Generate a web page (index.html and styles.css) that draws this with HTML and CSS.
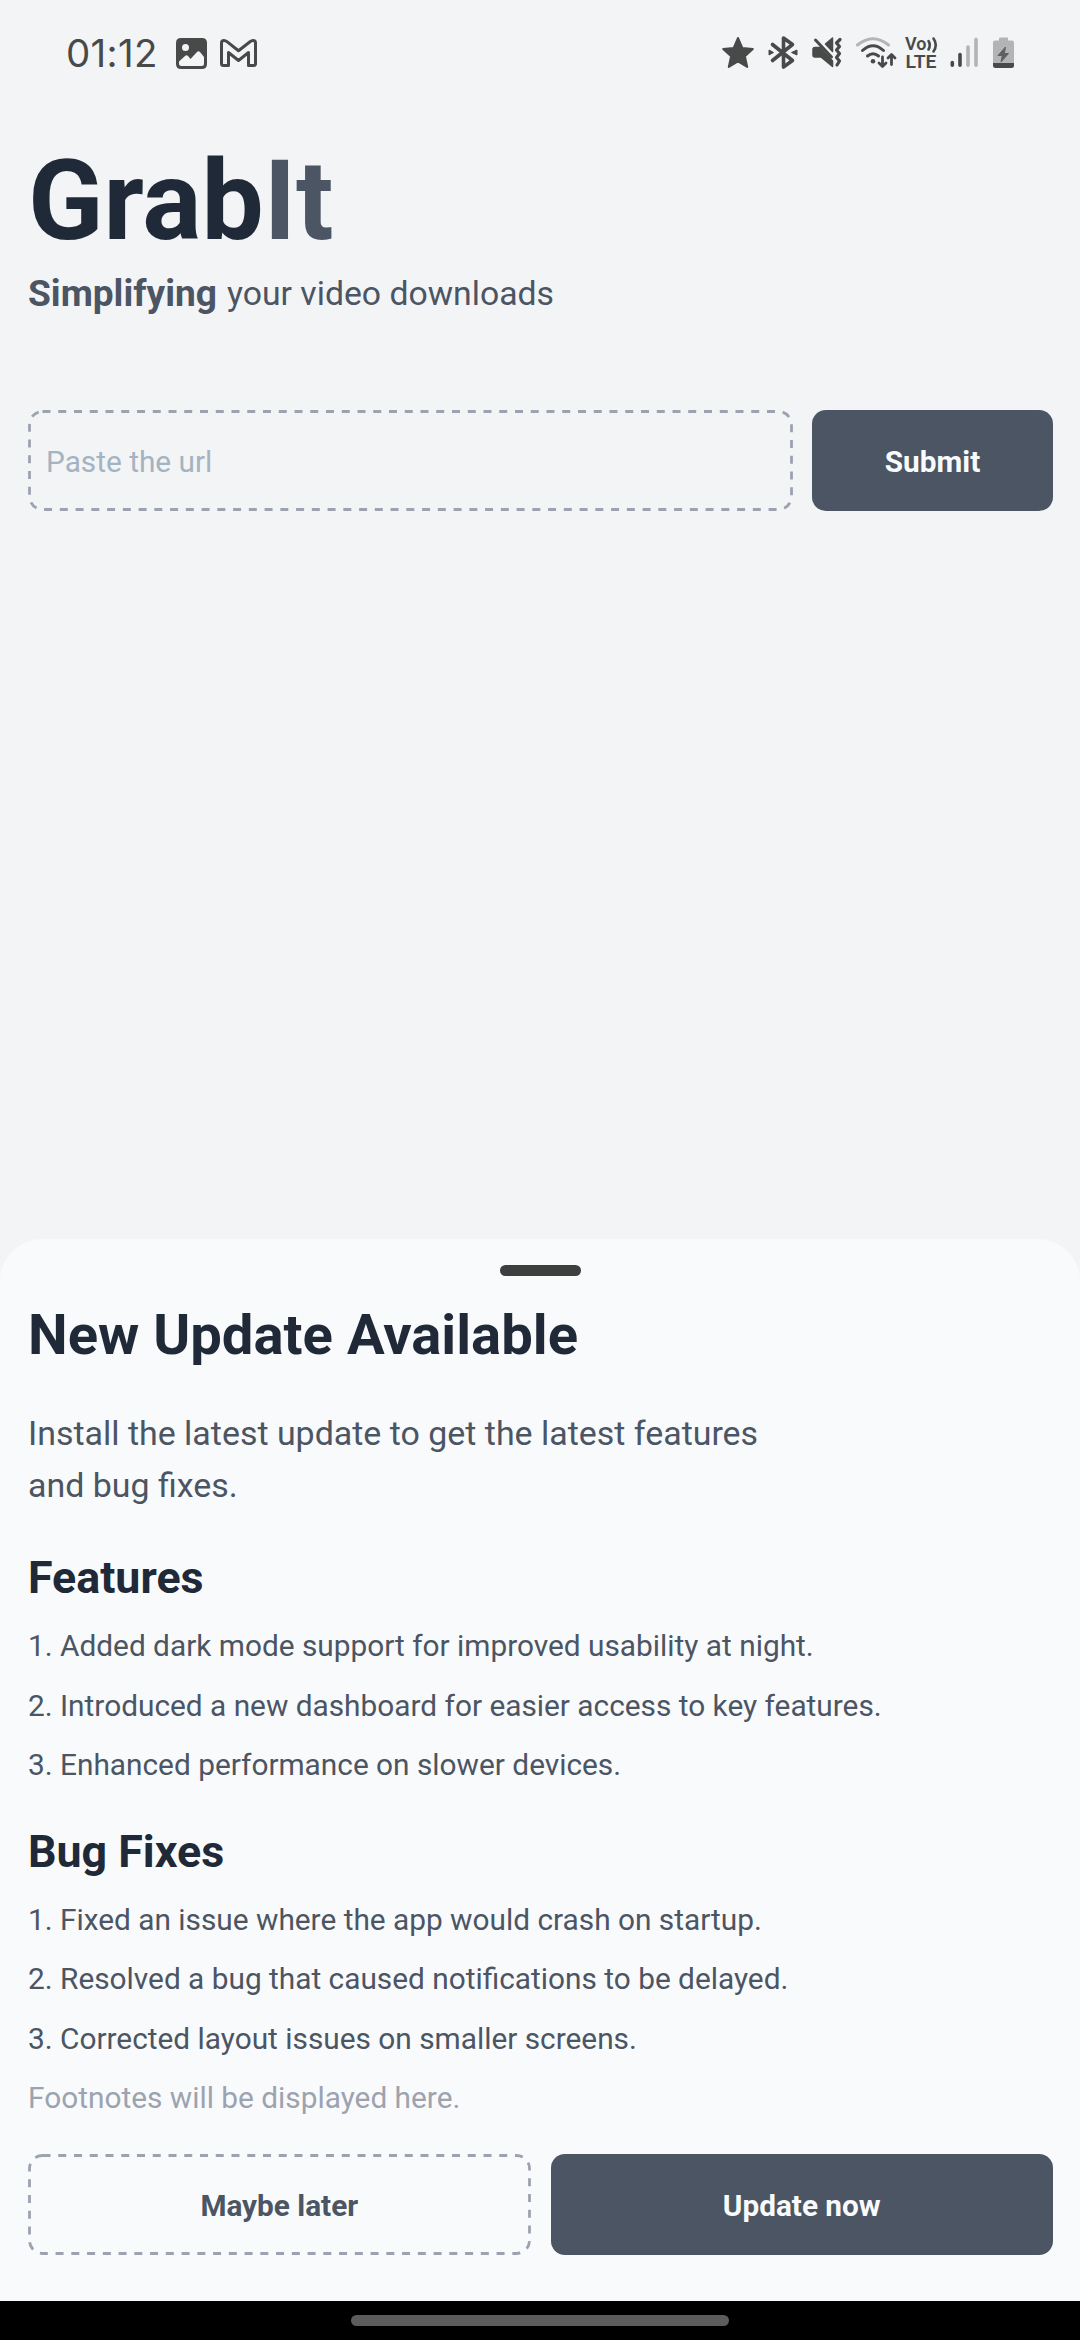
FILE: index.html
```html
<!DOCTYPE html>
<html lang="en">
<head>
<meta charset="utf-8">
<title>GrabIt</title>
<link rel="stylesheet" href="styles.css">
</head>
<body>
<div class="screen">
  <header class="status">
    <div class="status-left">
      <span class="clock">01:12</span>
      <svg class="ic-photo" width="31" height="31" viewBox="0 0 31 31"><path fill="#484a49" fill-rule="evenodd" d="M5 0H26Q31 0 31 5V26Q31 31 26 31H5Q0 31 0 26V5Q0 0 5 0ZM9.500 6A3.500 3.500 0 1 0 9.500 13A3.500 3.500 0 1 0 9.500 6ZM3 23.500V25.500Q3 28 5.500 28H25.500Q28 28 28 25.500V19L24 14Q22.500 12.500 21 14L14.500 21L12 18Q10.500 16.500 9 18Z"/></svg>
      <svg class="ic-mail" width="37" height="28" viewBox="0 0 37 28"><path fill="none" stroke="#484a49" stroke-width="3" stroke-linejoin="round" d="M1.500 24.500V4Q1.500 1.500 4 1.500Q5.500 1.500 7 2.700L18.500 11.700L30 2.700Q31.500 1.500 33 1.500Q35.500 1.500 35.500 4V24.500Q35.500 26.500 33.500 26.500H28.500V13.500L18.500 21.500L8.500 13.500V26.500H3.500Q1.500 26.500 1.500 24.500Z"/></svg>
    </div>
    <svg class="status-right" width="300" height="40" viewBox="720 33 300 40" fill="none" stroke="#484a49">
      <path fill="#484a49" stroke-width="2" stroke-linejoin="round" d="M738 38L742.300 48L752.800 49L744.900 56.200L747.200 67L738 61.500L728.800 67L731.100 56.200L723.200 49L733.700 48Z"/>
      <path stroke-width="3.600" stroke-linejoin="round" stroke-linecap="round" d="M772.500 44.500L792.500 60.500L783.500 67V38L792.500 44.500L772.500 60.500"/>
      <path fill="#484a49" stroke-width="1" d="M769 50L773.500 52.500L769 55ZM797 50L791.500 52.500L797 55Z"/>
      <path fill="#484a49" stroke-width="1.500" stroke-linejoin="round" d="M815 47.500H820L832.500 61V66.500L821 57H815Q813 57 813 55V49.500Q813 47.500 815 47.500ZM825.500 44L832.500 38V51.500Z"/>
      <path stroke-width="3" stroke-linecap="round" d="M815.500 40L831.500 57"/>
      <path stroke-width="3.200" stroke-linejoin="round" stroke-linecap="round" d="M840 39.500L836.500 43L839.500 46.500L836.500 50L839.500 53.500L836.500 57.500L839.500 61L837 65"/>
      <path stroke="#b2b4b5" stroke-width="3" stroke-linecap="round" d="M857.500 45Q873 32.500 888.500 45"/>
      <g stroke-width="3" stroke-linecap="round"><path d="M862.500 50.500Q873 41 883.500 50.500M867.500 56Q873 51.500 878.500 56"/><path stroke-width="2.800" stroke-linejoin="round" d="M882.500 57V66M879 63L882.500 66.500L886 63M891.500 64.500V55M888 58L891.500 54.500L895 58"/></g>
      <circle cx="873" cy="61.300" r="2.300" fill="#484a49" stroke="none"/>
      <g fill="#484a49" stroke="none" class="volte"><text x="905" y="50" textLength="21.500" lengthAdjust="spacingAndGlyphs">Vo</text><text x="905.500" y="68" textLength="31" lengthAdjust="spacingAndGlyphs">LTE</text></g>
      <path stroke-width="2.600" stroke-linecap="round" d="M928.500 41Q931 45 928.500 49.500M933.500 38.500Q938 45 933.500 51.500"/>
      <g stroke-width="3.600" stroke-linecap="round"><path d="M952.300 62.500V65.300M960 54.500V65.300"/><path stroke="#b2b4b5" d="M968 47V65.300M976 39.500V65.300"/></g>
      <path fill="#b2b4b5" stroke="none" d="M1000.500 37.500H1007Q1008 37.500 1008 38.500V40.500H1012Q1014 40.500 1014 42.500V63H993V42.500Q993 40.500 995 40.500H999V38.500Q999 37.500 1000.500 37.500Z"/>
      <path fill="#484a49" stroke="none" d="M993 63H1014V65.500Q1014 68 1011.500 68H995.500Q993 68 993 65.500Z"/>
      <path fill="#5f6160" stroke="#5f6160" stroke-width="1" stroke-linejoin="round" d="M1005.500 47L998 55.500H1002.300L1001 62L1008.500 53.500H1004.300Z"/>
    </svg>
  </header>

  <main class="home">
    <h1 class="brand">Grab<span>It</span></h1>
    <p class="tagline"><strong>Simplifying</strong><span>your video downloads</span></p>
    <form class="url-form">
      <div class="field"><svg class="dash"><rect class="dash-line" x="1.500" y="1.500" width="762" height="98" rx="13"/></svg><span class="placeholder">Paste the url</span></div>
      <div class="btn solid submit">Submit</div>
    </form>
  </main>

  <section class="sheet">
    <div class="handle"></div>
    <h2>New Update Available</h2>
    <p class="intro">Install the latest update to get the latest features<br>and bug fixes.</p>
    <h3>Features</h3>
    <ul>
      <li>1. Added dark mode support for improved usability at night.</li>
      <li>2. Introduced a new dashboard for easier access to key features.</li>
      <li>3. Enhanced performance on slower devices.</li>
    </ul>
    <h3>Bug Fixes</h3>
    <ul>
      <li>1. Fixed an issue where the app would crash on startup.</li>
      <li>2. Resolved a bug that caused notifications to be delayed.</li>
      <li>3. Corrected layout issues on smaller screens.</li>
    </ul>
    <p class="foot">Footnotes will be displayed here.</p>
    <div class="actions">
      <div class="btn outline"><svg class="dash"><rect class="dash-line" x="1.500" y="1.500" width="500" height="98" rx="13"/></svg>Maybe later</div>
      <div class="btn solid">Update now</div>
    </div>
  </section>
  <footer class="nav"><div class="pill"></div></footer>
</div>
</body>
</html>
```

FILE: styles.css
```css
* { box-sizing: border-box; margin: 0; padding: 0; }
body { background: #f3f4f6; font-family: Roboto, sans-serif; color: #4b5563; }
.screen { width: 1080px; height: 2340px; display: flex; flex-direction: column; overflow: hidden; }
.status { height: 106px; display: flex; justify-content: space-between; padding: 0 60px 0 66px; }
.status-left { display: flex; align-items: flex-start; padding-top: 38px; }
.status-left svg { margin-right: 13px; }
.status-left .ic-mail { margin-top: 1px; }
.clock { width: 110px; margin-top: -9px; font: 400 38.500px/48px Inter, sans-serif; color: #484a49; letter-spacing: 0.300px; white-space: nowrap; }
.status-right { margin-top: 33px; }
.volte { font: 600 17.500px Roboto, sans-serif; }
.home { height: 1133px; padding: 29px 27px 0 28px; }
.brand { font-size: 110.700px; line-height: 132px; font-weight: 700; color: #1f2937; }
.brand span { color: #4b5563; }
.tagline { display: flex; align-items: center; gap: 10px; height: 53px; font-size: 33.750px; line-height: 40px; }
.tagline strong { font-size: 37.100px; }
.url-form { display: flex; gap: 19px; margin-top: 90px; }
.field { position: relative; width: 765px; height: 101px; display: flex; align-items: center; padding: 2px 0 0 18px; }
.dash { position: absolute; inset: 0; width: 100%; height: 100%; }
.dash-line { fill: none; stroke: #9ca3af; stroke-width: 2.800px; stroke-dasharray: 8 7.750; }
.placeholder { font-size: 29.800px; color: #a3b3c2; }
.btn { position: relative; flex: 1; height: 101px; border-radius: 14px; padding-top: 2px; display: flex; align-items: center; justify-content: center; font-size: 29.750px; font-weight: 700; }
.solid { background: #4b5563; color: #f9fafb; }
.sheet { height: 1062px; background: #f9fafc; border-radius: 42px 42px 0 0; padding: 26px 27px 0 28px; }
.handle { width: 81px; height: 11px; border-radius: 5.500px; background: #3c3f3e; margin: 0 auto; }
h2 { margin-top: 26px; font-size: 56.200px; line-height: 66px; color: #1f2937; }
.intro { margin-top: 40px; font-size: 33.930px; line-height: 52px; }
h3 { margin-top: 39px; font-size: 44.750px; line-height: 53px; color: #1f2937; }
ul { list-style: none; margin-top: 12px; }
li, .foot { font-size: 29.820px; line-height: 59.500px; }
ul + h3 { margin-top: 30px; }
.foot { color: #9ca3af; }
.actions { display: flex; gap: 20px; margin-top: 26px; }
.nav { height: 39px; background: #000; padding-top: 14px; }
.pill { width: 378px; height: 11px; border-radius: 5.500px; background: #5c5c5c; margin: 0 auto; }
```
